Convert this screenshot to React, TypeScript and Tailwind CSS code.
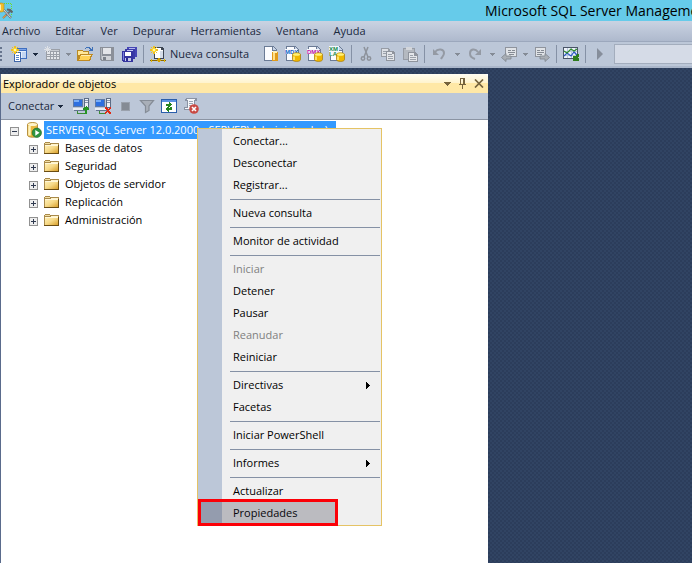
import React from "react";

type Kids = { children?: React.ReactNode };

function Icon({ children }: Kids) {
  return (
    <svg viewBox="0 0 16 16" className="h-4 w-4 shrink-0" shapeRendering="crispEdges" aria-hidden="true">
      {children}
    </svg>
  );
}

function Spark() {
  return (
    <g>
      <path d="M3 0h2v8H3zM0 3h8v2H0zM1 1h1v1H1zM6 1h1v1H6zM1 6h1v1H1zM6 6h1v1H6z" fill="#f0c020" />
      <path d="M2 2h4v4H2z" fill="#ffd92e" />
      <path d="M3 3h2v2H3z" fill="#fff6b0" />
    </g>
  );
}

function NewProject() {
  return (
    <Icon>
      <path d="M3 2h13v11H3z" fill="#3f6fc0" />
      <path d="M4 5h11v7H4z" fill="#e6effb" />
      <path d="M5 3h10v1H5z" fill="#7ea5e8" />
      <path d="M11 6h4v6h-4z" fill="#c3d6f2" />
      <path d="M3 6h7v10H3z" fill="#3f66a8" />
      <path d="M4 7h5v8H4z" fill="#fff" />
      <path d="M5 9h3v1H5zM5 11h3v1H5zM5 13h3v1H5z" fill="#5584c8" />
      <Spark />
    </Icon>
  );
}

function GridIcon() {
  return (
    <Icon>
      <path d="M2 3h14v11H2z" fill="#9a9fa7" />
      <path d="M3 4h12v1H3z" fill="#c8ccd2" />
      <path d="M3 6h3v2H3zM7 6h2v2H7zM10 6h2v2h-2zM13 6h2v2h-2zM3 9h3v1H3zM7 9h2v1H7zM10 9h2v1h-2zM13 9h2v1h-2zM3 11h3v2H3zM7 11h2v2H7zM10 11h2v2h-2zM13 11h2v2h-2z" fill="#e4e7eb" />
      <path d="M3 0h1v7H3zM0 3h7v1H0zM1 1h1v1H1zM5 1h1v1H5zM1 5h1v1H1zM5 5h1v1H5zM2 2h3v3H2z" fill="#dfe2e6" />
    </Icon>
  );
}

function OpenIcon() {
  return (
    <Icon>
      <path d="M0 4h5l1 1h6v10H0z" fill="#b98a25" />
      <path d="M1 5h4l1 1h5v3H1z" fill="#ffe79a" />
      <path d="M3 8h13l-3 7H0z" fill="#c08a22" />
      <path d="M4 9h10l-2 5H2z" fill="#ffd257" />
      <path d="M4 9h10v1H4z" fill="#ffeeb0" />
      <path d="M8 2h1V1h4v1h1v1h1V1h1v4h-4V4h1V3h-1V2H9v1H8z" fill="#3e71b8" />
    </Icon>
  );
}

function SaveIcon() {
  return (
    <Icon>
      <path d="M1 1h14v14H2l-1-1z" fill="#8b9099" />
      <path d="M4 2h8v6H4z" fill="#e3e5e9" />
      <path d="M3 10h9v4H3z" fill="#d0d3d8" />
      <path d="M4 11h3v3H4z" fill="#7b818a" />
      <path d="M2 2h1v11H2z" fill="#b0b5bc" />
    </Icon>
  );
}

function SaveAllIcon() {
  return (
    <Icon>
      <path d="M6 1h10v10H6z" fill="#4646b4" />
      <path d="M8 2h6v2H8z" fill="#b4b7f0" />
      <path d="M4 3h10v10H4z" fill="#3a3aa8" />
      <path d="M6 4h6v2H6z" fill="#c3c6f5" />
      <path d="M1 5h11v11H2l-1-1z" fill="#35359f" />
      <path d="M2 6h1v8H2z" fill="#7c80dd" />
      <path d="M4 6h6v4H4z" fill="#fff" />
      <path d="M4 12h6v3H4z" fill="#c7c9e8" />
      <path d="M5 12h2v3H5z" fill="#2b2b93" />
    </Icon>
  );
}

function NewQueryIcon() {
  return (
    <Icon>
      <path d="M4 1h8l2 2v10H4z" fill="#3c4552" />
      <path d="M5 2h6v2h2v8H5z" fill="#fff" />
      <path d="M10 5h3v7h-3z" fill="#d5dde9" />
      <path d="M0 14h16v1H0z" fill="#8a6a00" />
      <path d="M8 12h2v4H8zM7 13h4v2H7z" fill="#d6a200" />
      <path d="M1 13h1v3H1zM14 13h1v3h-1z" fill="#e6b800" />
      <Spark />
    </Icon>
  );
}

function Cylinder() {
  return (
    <g shapeRendering="auto">
      <path d="M7.500 8.500c0-2.200 8-2.200 8 0v5c0 2.600-8 2.600-8 0z" fill="#f0b800" stroke="#a87800" strokeWidth=".7" />
      <ellipse cx="11.500" cy="8.500" rx="3.500" ry="1.300" fill="#fff27a" />
      <path d="M9 10.500v3.500" stroke="#fff08a" strokeWidth="1.500" />
    </g>
  );
}

function PageShape() {
  return (
    <>
      <path d="M1 0h9l4 4v11H1z" fill="#6b7b95" />
      <path d="M2 1h7v4h4v9H2z" fill="#fbfcff" />
      <path d="M10 1l3 3h-3z" fill="#c7d3e7" />
    </>
  );
}

function DbPage() {
  return (
    <Icon>
      <PageShape />
      <path d="M9 6h6v9H9z" fill="#e09a1a" />
      <path d="M10 7h2v7h-2z" fill="#ffe08a" />
      <path d="M10 5h4v2h-4z" fill="#fff0b5" />
    </Icon>
  );
}

function TaggedPage({ lines, color }: { lines: string[]; color: string }) {
  return (
    <Icon>
      <PageShape />
      <path d={lines.length > 1 ? "M0 0h10v10H0z" : "M0 3h12v5H0z"} fill="#f4f7fc" />
      {lines.map((l, i) => (
        <text key={l} x="0" y={lines.length > 1 ? 5 + i * 5 : 8} fontSize="6" fontWeight="700" fontFamily="Liberation Sans, sans-serif" fill={color}>
          {l}
        </text>
      ))}
      <Cylinder />
    </Icon>
  );
}

function CutIcon() {
  return (
    <Icon>
      <g shapeRendering="auto" fill="none" stroke="#8d929b" strokeWidth="1.500">
        <path d="M6 1l4 10M10 1L6 11" />
        <circle cx="5" cy="12.500" r="1.700" />
        <circle cx="11" cy="12.500" r="1.700" />
      </g>
    </Icon>
  );
}

function CopyIcon() {
  return (
    <Icon>
      <path d="M1 2h7l2 2v7H1z" fill="#979ca5" />
      <path d="M2 3h6v2h1v5H2z" fill="#dde0e5" />
      <path d="M3 5h4v1H3zM3 7h4v1H3z" fill="#9ba1aa" />
      <path d="M6 5h7l2 2v8H6z" fill="#8f949d" />
      <path d="M7 6h5v2h2v6H7z" fill="#e4e6ea" />
      <path d="M8 8h4v1H8zM8 10h5v1H8zM8 12h5v1H8z" fill="#9ba1aa" />
    </Icon>
  );
}

function PasteIcon() {
  return (
    <Icon>
      <path d="M1 2h12v12H1z" fill="#979ca5" />
      <path d="M2 3h10v10H2z" fill="#b4b9c0" />
      <path d="M4 1h6v3H4z" fill="#d3d6db" />
      <path d="M6 6h7l3 3v7H6z" fill="#8f949d" />
      <path d="M7 7h5v3h3v5H7z" fill="#e4e6ea" />
      <path d="M8 9h3v1H8zM8 11h6v1H8zM8 13h6v1H8z" fill="#9ba1aa" />
    </Icon>
  );
}

function UndoIcon() {
  return (
    <Icon>
      <g shapeRendering="auto">
        <path d="M4 6c3-4 9-3 9 1 0 3-2 4-3 6" fill="none" stroke="#949aa4" strokeWidth="2" />
        <path d="M2 3v6h6z" fill="#949aa4" />
      </g>
    </Icon>
  );
}

function RedoIcon() {
  return (
    <Icon>
      <g shapeRendering="auto">
        <path d="M12 6C9 2 4 3 4 7.500c0 3 2 4.500 5 5.500" fill="none" stroke="#949aa4" strokeWidth="2" />
        <path d="M15 3v6H9z" fill="#949aa4" />
      </g>
    </Icon>
  );
}

function NavIcon({ forward = false }: { forward?: boolean }) {
  return (
    <Icon>
      <path d={forward ? "M1 1h11v10H1z" : "M4 1h12v10H4z"} fill="#8f949d" />
      <path d={forward ? "M2 2h9v8H2z" : "M5 2h10v8H5z"} fill="#e0e3e7" />
      <path d={forward ? "M3 4h3v1H3zM7 4h3v1H7zM3 6h7v1H3zM3 8h5v1H3z" : "M7 4h3v1H7zM11 4h3v1h-3zM7 6h7v1H7zM8 8h5v1H8z"} fill="#858b94" />
      <path
        shapeRendering="auto"
        d={forward ? "M6 10h5V7.500l4.500 4-4.500 4V13H6z" : "M10 10H5V7.500L.500 11.500l4.500 4V13h5z"}
        fill="#a9aeb5"
        stroke="#7f858e"
        strokeWidth=".8"
      />
    </Icon>
  );
}

function ActivityIcon() {
  return (
    <Icon>
      <path d="M0 1h15v12H0z" fill="#4a5568" />
      <path d="M1 2h13v10H1z" fill="#eef3fa" />
      <path d="M4 2h1v10H4zM8 2h1v10H8zM12 2h1v10h-1zM1 5h13v1H1zM1 9h13v1H1z" fill="#b9c8de" />
      <g shapeRendering="auto" fill="none" strokeWidth="1.200">
        <path d="M1 10l3-3 4 3 3-4 3 3" stroke="#2b57c4" />
        <path d="M1 5l3 2 4-4 3 2 3-2" stroke="#2e8b2e" />
      </g>
      <path d="M10 10h2l2-2h2v2l-2 2h2v3h-6z" fill="#2f7d1d" />
    </Icon>
  );
}

function PlayIcon() {
  return (
    <Icon>
      <path d="M5 2l6 6-6 6z" fill="#868e9b" shapeRendering="auto" />
    </Icon>
  );
}

function ServerLink({ off = false }: { off?: boolean }) {
  return (
    <Icon>
      <path d="M0 1h10v8H0z" fill="#5f7aa5" />
      <path d="M1 2h8v6H1z" fill="#2d6fe0" />
      <path d="M1 2h5v2H1z" fill="#79adf6" />
      <path d="M0 10h11v2H0z" fill="#e9edf3" />
      <path d="M1 12h11v1H1z" fill="#64748f" />
      <path d="M11 0h5v10h-5z" fill="#5c6c86" />
      <path d="M12 1h3v8h-3z" fill="#eef1f6" />
      <path d="M12 2h3v1h-3zM12 4h3v1h-3z" fill="#8493ac" />
      <path d="M4 13h1v2h6v1H4z" fill="#3d8b37" />
      {off ? (
        <path d="M10 9h2v1h1v1h1v-1h1V9h1v2h-1v1h-1v1h1v1h1v2h-2v-1h-1v-1h-1v1h-1v1h-1v-2h1v-1h1v-1h-1v-1h-1z" fill="#e02a14" />
      ) : (
        <path d="M13 8h1v1h1v1h1v2h-2v4h-3v-1h1v-3h-2v-2h1V9h2z" fill="#259423" />
      )}
    </Icon>
  );
}

function StopIcon() {
  return (
    <Icon>
      <path d="M4 4h9v9H4z" fill="#9aa1ac" />
      <path d="M5 5h7v7H5z" fill="#858b94" />
    </Icon>
  );
}

function FilterIcon() {
  return (
    <Icon>
      <path d="M1.500 2.500h13L10 8v4.500L6.500 14.500V8z" fill="#a9afb8" stroke="#858c96" strokeWidth="1.200" shapeRendering="auto" />
    </Icon>
  );
}

function RefreshIcon() {
  return (
    <Icon>
      <path d="M0 1h16v14H0z" fill="#2a5eab" />
      <path d="M1 2h14v2H1z" fill="#5d93e3" />
      <path d="M1 4h14v10H1z" fill="#fff" />
      <path d="M5 8V6h3V4l3 3-3 2V8zM11 9v3H8v2l-4-3 4-3v2h1V9z" fill="#25851f" />
    </Icon>
  );
}

function ScriptErrorIcon() {
  return (
    <Icon>
      <path d="M3 0h11v3h-2v9H1v-3h3V3H2V1z" fill="#8a93a3" />
      <path d="M4 1h8v1h-1v9H2v-1h3V2H4z" fill="#f5f7fa" />
      <path d="M6 3h4v1H6zM6 5h4v1H6zM6 7h2v1H6z" fill="#9aa5b5" />
      <g shapeRendering="auto">
        <circle cx="11" cy="11" r="4.800" fill="#c94a44" />
        <path d="M9 9l4 4m0-4l-4 4" stroke="#fff" strokeWidth="1.600" />
      </g>
    </Icon>
  );
}

function FolderIcon() {
  return (
    <Icon>
      <defs>
        <linearGradient id="folderFace" x1="0" y1="0" x2="1" y2="1">
          <stop offset="0" stopColor="#fff0b8" />
          <stop offset=".5" stopColor="#f6d987" />
          <stop offset="1" stopColor="#d9a02c" />
        </linearGradient>
      </defs>
      <path d="M0 3h1V2h5v1h9v1h0v10H0z" fill="#a98a4a" />
      <path d="M14 5h1v9H0v-1h14z" fill="#6b4d12" />
      <path d="M1 3h5v1H1z" fill="#f3dfa4" />
      <path d="M7 4h7v1H7z" fill="#fff4cc" />
      <path d="M1 5h13v8H1z" fill="url(#folderFace)" />
      <path d="M1 5h13v1H1z" fill="#fff7d8" />
    </Icon>
  );
}

function ServerIcon() {
  return (
    <Icon>
      <g shapeRendering="auto">
        <path d="M1.500 2.500c0-2.600 10-2.600 10 0v10.500c0 3-10 3-10 0z" fill="#e9b83f" stroke="#a87f2a" strokeWidth=".8" />
        <path d="M3.500 4v9.500" stroke="#fff3bd" strokeWidth="2.500" />
        <ellipse cx="6.500" cy="2.500" rx="4.600" ry="1.500" fill="#fff4cc" />
        <circle cx="10.800" cy="10.800" r="4.700" fill="#2f9440" stroke="#176324" strokeWidth=".6" />
        <path d="M9.300 7.900v5.800l4.200-2.900z" fill="#fff" />
      </g>
    </Icon>
  );
}

function AppIcon() {
  return (
    <svg viewBox="0 0 13 20" className="h-5 w-[13px] shrink-0" aria-hidden="true">
      <path d="M4 2.500h7.500v13" fill="none" stroke="#6fdc2c" strokeDasharray="1 1" />
      <path d="M0 2c3 0 4 .5 4 1.500v6c0 1-1 1.500-4 1.500z" fill="#f2bd2e" stroke="#c08d13" strokeWidth=".6" />
      <path d="M0 3.500v6" stroke="#fff0b0" strokeWidth="2" />
      <path d="M4 9l7 8M10.500 10L3 17" stroke="#70757c" strokeWidth="2" />
      <path d="M4 9l6.500 7.500" stroke="#eef1f4" strokeWidth=".8" />
      <path d="M7 8.500l3 .5 2.500 2.500" stroke="#5d646d" strokeWidth="2" fill="none" />
      <path d="M6 14l-3 3" stroke="#d89b4a" strokeWidth="1.500" />
    </svg>
  );
}

function Caret({ className }: { className: string }) {
  return (
    <svg viewBox="0 0 7 4" className={"h-1 w-[7px] shrink-0 " + className} shapeRendering="crispEdges" aria-hidden="true">
      <path d="M0 0h7v1H6v1H5v1H4v1H3V3H2V2H1V1H0z" fill="currentColor" />
    </svg>
  );
}

function SmallCaret({ className }: { className: string }) {
  return (
    <svg viewBox="0 0 5 3" className={"h-[3px] w-[5px] shrink-0 " + className} shapeRendering="crispEdges" aria-hidden="true">
      <path d="M0 0h5v1H4v1H3v1H2V2H1V1H0z" fill="currentColor" />
    </svg>
  );
}

function ToolButton({ label, children }: Kids & { label: string }) {
  return (
    <button type="button" aria-label={label} className="flex h-6 w-[22px] shrink-0 items-center justify-center">
      {children}
    </button>
  );
}

function DropButton({ label, wide, disabled, children }: Kids & { label: string; wide?: boolean; disabled?: boolean }) {
  return (
    <button
      type="button"
      aria-label={label}
      className={"flex h-6 shrink-0 items-center justify-between px-[3px] " + (wide ? "w-[35px]" : "w-[33px]")}
    >
      {children}
      <SmallCaret className={disabled ? "text-[#848b96]" : "text-[#1b293e]"} />
    </button>
  );
}

function Divider() {
  return <span className="mx-[3px] h-[18px] w-px shrink-0 bg-[#8591a5]" />;
}

const menus = ["Archivo", "Editar", "Ver", "Depurar", "Herramientas", "Ventana", "Ayuda"];
const folders = ["Bases de datos", "Seguridad", "Objetos de servidor", "Replicación", "Administración"];

type Entry = { label: string; disabled?: boolean; sub?: boolean; marked?: boolean };
const groups: Entry[][] = [
  [{ label: "Conectar..." }, { label: "Desconectar" }, { label: "Registrar..." }],
  [{ label: "Nueva consulta" }],
  [{ label: "Monitor de actividad" }],
  [
    { label: "Iniciar", disabled: true },
    { label: "Detener" },
    { label: "Pausar" },
    { label: "Reanudar", disabled: true },
    { label: "Reiniciar" },
  ],
  [{ label: "Directivas", sub: true }, { label: "Facetas" }],
  [{ label: "Iniciar PowerShell" }],
  [{ label: "Informes", sub: true }],
  [{ label: "Actualizar" }, { label: "Propiedades", marked: true }],
];

function Expander({ open = false }: { open?: boolean }) {
  return (
    <svg viewBox="0 0 9 9" className="mt-0.5 h-[9px] w-[9px] shrink-0" shapeRendering="crispEdges" aria-hidden="true">
      <path d="M0 0h9v9H0z" fill="#919191" />
      <path d="M1 1h7v7H1z" fill="#eee" />
      <path d={open ? "M2 4h5v1H2z" : "M2 4h5v1H2zM4 2h1v5H4z"} fill="#303a50" />
    </svg>
  );
}

function ContextMenu() {
  return (
    <div
      role="menu"
      className="absolute left-[197px] top-[128px] w-[185px] border border-[#e5c365] bg-[linear-gradient(to_right,#bcc7d8_24px,#f0f0f0_24px)] py-px"
    >
      {groups.map((g, i) => (
        <div key={i}>
          {i > 0 && <hr className="my-[2px] ml-8 mr-px h-[2px] border-0 border-b border-[#8591a5]" />}
          {g.map((e) => (
            <div key={e.label} className="relative">
              <button
                type="button"
                role="menuitem"
                disabled={e.disabled}
                className={"flex h-[22px] w-full items-center justify-between pl-[35px] pr-[9px] " + (e.disabled ? "text-[#808080]" : "text-black")}
              >
                {e.label}
                {e.sub && (
                  <svg viewBox="0 0 4 7" className="mr-0.5 h-[7px] w-1" shapeRendering="crispEdges" aria-hidden="true">
                    <path d="M0 0h1v1h1v1h1v1h1v1H3v1H2v1H1v1H0z" />
                  </svg>
                )}
              </button>
              {e.marked && (
                <span className="pointer-events-none absolute -bottom-0.5 -top-[3px] left-0 w-[140px] border-[3px] border-[#fb0007] bg-[#1c1c30]/25" />
              )}
            </div>
          ))}
        </div>
      ))}
    </div>
  );
}

export default function App() {
  return (
    <div className="relative flex min-h-screen flex-col overflow-hidden bg-[#2c3d5b] bg-[conic-gradient(#314463_25%,transparent_0_50%,#314463_0_75%,transparent_0)] bg-[size:4px_4px] font-['Open_Sans','Noto_Sans',sans-serif] text-[11px] leading-4 text-black">
      <header className="flex h-[21px] items-center overflow-hidden bg-[#66cbea]">
        <AppIcon />
        <h1 className="ml-[472px] whitespace-nowrap text-[14px] leading-5">Microsoft SQL Server Management Studio</h1>
      </header>

      <nav className="flex h-[21px] items-center gap-[15px] border-b border-[#9ca8bd] bg-linear-to-b from-[#cad3e2] to-[#aeb9cd] pl-[2px] text-[#1b293e]">
        {menus.map((m) => (
          <button key={m} type="button">
            {m}
          </button>
        ))}
      </nav>

      <div className="flex h-[26px] items-center overflow-hidden border-b-2 border-[#aab6ca] bg-[#bcc7d8] text-[#1b293e]">
        <span className="mr-1.5 h-[14px] w-[2px] shrink-0 bg-[repeating-linear-gradient(#66748d_0_2px,transparent_2px_4px)]" />
        <DropButton label="Nuevo proyecto"><NewProject /></DropButton>
        <DropButton label="Agregar elemento" disabled><GridIcon /></DropButton>
        <ToolButton label="Abrir"><OpenIcon /></ToolButton>
        <ToolButton label="Guardar"><SaveIcon /></ToolButton>
        <ToolButton label="Guardar todo"><SaveAllIcon /></ToolButton>
        <Divider />
        <button type="button" className="flex h-6 w-[113px] shrink-0 items-center gap-1 whitespace-nowrap pl-[3px]">
          <NewQueryIcon />
          Nueva consulta
        </button>
        <ToolButton label="Consulta de motor"><DbPage /></ToolButton>
        <ToolButton label="Consulta MDX"><TaggedPage lines={["MDX"]} color="#1565c8" /></ToolButton>
        <ToolButton label="Consulta DMX"><TaggedPage lines={["DMX"]} color="#c013a8" /></ToolButton>
        <ToolButton label="Consulta XMLA"><TaggedPage lines={["XM", "LA"]} color="#178b4c" /></ToolButton>
        <Divider />
        <ToolButton label="Cortar"><CutIcon /></ToolButton>
        <ToolButton label="Copiar"><CopyIcon /></ToolButton>
        <ToolButton label="Pegar"><PasteIcon /></ToolButton>
        <Divider />
        <DropButton label="Deshacer" wide disabled><UndoIcon /></DropButton>
        <DropButton label="Rehacer" wide disabled><RedoIcon /></DropButton>
        <DropButton label="Navegar hacia atrás" disabled><NavIcon /></DropButton>
        <ToolButton label="Navegar hacia delante"><NavIcon forward /></ToolButton>
        <Divider />
        <ToolButton label="Monitor de actividad"><ActivityIcon /></ToolButton>
        <Divider />
        <ToolButton label="Iniciar"><PlayIcon /></ToolButton>
        <select aria-label="Configuración" className="ml-[3px] h-5 min-w-[120px] flex-1 appearance-none border border-[#a3adbd] bg-[#d5dbe7]" />
      </div>

      <main className="flex flex-1 pt-1.5">
        <section className="flex w-[488px] max-w-full flex-col border-l border-[#5a6b8c] bg-white">
          <div className="flex h-[19px] items-center rounded-tr-sm bg-[linear-gradient(#fffdf2,#fff3cb_50%,#ffe8a6_50%)] pl-[2px] pr-1">
            <h2 className="flex-1">Explorador de objetos</h2>
            <div className="flex items-center gap-2 text-[#75633d]">
              <button type="button" aria-label="Opciones de ventana"><Caret className="text-[#75633d]" /></button>
              <button type="button" aria-label="Ocultar automáticamente">
                <svg viewBox="0 0 7 11" className="h-[11px] w-[7px]" shapeRendering="crispEdges" aria-hidden="true">
                  <path d="M1 0h5v6h1v1H4v4H3V7H0V6h1zm1 1v5h2V1z" fill="currentColor" fillRule="evenodd" />
                </svg>
              </button>
              <button type="button" aria-label="Cerrar">
                <svg viewBox="0 0 10 9" className="h-[9px] w-[10px]" aria-hidden="true">
                  <path d="M1 .500l8 8M9 .500l-8 8" stroke="currentColor" strokeWidth="1.700" />
                </svg>
              </button>
            </div>
          </div>
          <div className="flex h-[27px] items-center border-b border-[#8b94a3] bg-[#bcc7d8] text-[#1b293e]">
            <button type="button" className="flex w-[69px] items-center gap-1 pl-[7px]">
              Conectar
              <SmallCaret className="text-[#1b293e]" />
            </button>
            <ToolButton label="Conectar"><ServerLink /></ToolButton>
            <ToolButton label="Desconectar"><ServerLink off /></ToolButton>
            <ToolButton label="Detener"><StopIcon /></ToolButton>
            <ToolButton label="Filtro"><FilterIcon /></ToolButton>
            <ToolButton label="Actualizar"><RefreshIcon /></ToolButton>
            <ToolButton label="Script"><ScriptErrorIcon /></ToolButton>
          </div>
          <ul className="flex-1 pt-px">
            <li>
              <button type="button" className="flex h-[18px] items-center pl-[9px]">
                <Expander open />
                <span className="ml-[7px] mr-0.5 flex"><ServerIcon /></span>
                <span className="h-[18px] whitespace-nowrap bg-[#3399ff] pl-0.5 pr-2 leading-[18px] text-white">
                  SERVER (SQL Server 12.0.2000 - SERVER\Administrador)
                </span>
              </button>
              <ul>
                {folders.map((f) => (
                  <li key={f}>
                    <button type="button" className="flex h-[18px] items-center pl-7">
                      <Expander />
                      <span className="ml-1.5 mr-[5px] flex"><FolderIcon /></span>
                      {f}
                    </button>
                  </li>
                ))}
              </ul>
            </li>
          </ul>
        </section>
      </main>
      <ContextMenu />
    </div>
  );
}
